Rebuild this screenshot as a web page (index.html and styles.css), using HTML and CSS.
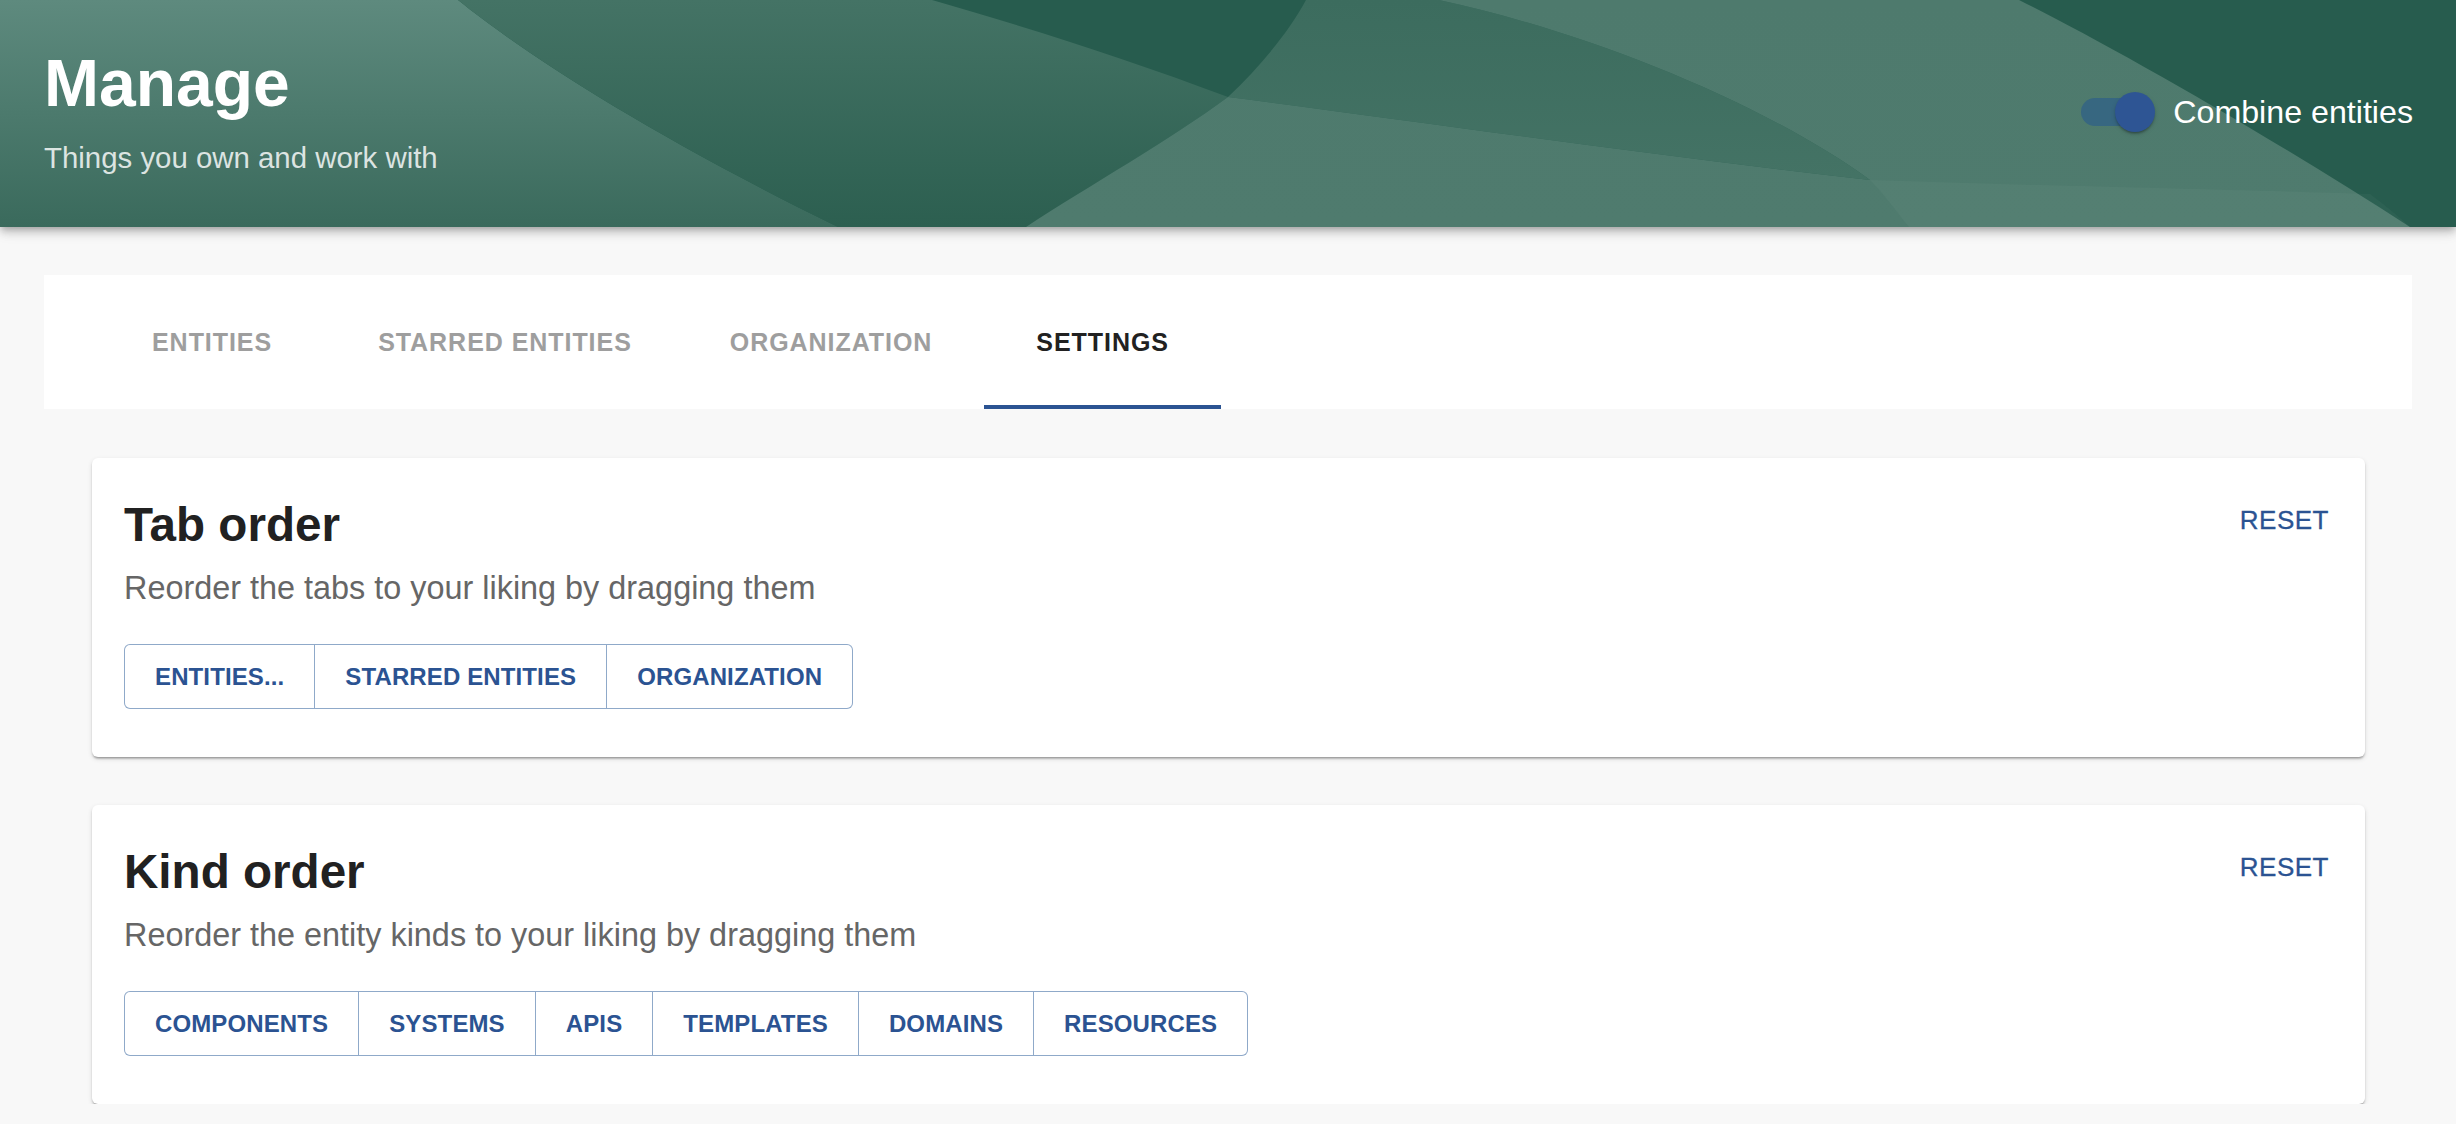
FILE: index.html
```html
<!DOCTYPE html>
<html lang="en">
<head>
<meta charset="utf-8">
<title>Manage</title>
<link rel="stylesheet" href="styles.css">
</head>
<body>
<header class="header">
  <svg class="header-bg" viewBox="0 0 2456 227" preserveAspectRatio="none" aria-hidden="true">
    <defs>
      <linearGradient id="gLeft" x1="0" y1="0" x2="0" y2="1">
        <stop offset="0" stop-color="#5e8a7e"/>
        <stop offset="1" stop-color="#3a6a5c"/>
      </linearGradient>
      <linearGradient id="gMid" x1="0" y1="0" x2="0" y2="1">
        <stop offset="0" stop-color="#447365"/>
        <stop offset="1" stop-color="#2c5f50"/>
      </linearGradient>
      <linearGradient id="gCD" x1="0" y1="0" x2="0" y2="1">
        <stop offset="0" stop-color="#3c6c5e"/>
        <stop offset="1" stop-color="#447365"/>
      </linearGradient>
      <linearGradient id="gLight" x1="0" y1="0" x2="0" y2="1">
        <stop offset="0" stop-color="#4e7a6d"/>
        <stop offset="1" stop-color="#4f7b6e"/>
      </linearGradient>
    </defs>
    <rect x="0" y="0" width="2456" height="227" fill="#275c4e"/>
    <path d="M0 0 H458 C520 50 640 130 838 227 H0 Z" fill="url(#gLeft)"/>
    <path d="M458 0 H932 C1020 25 1130 60 1228 97 C1170 140 1090 185 1026 227 H838 C640 130 520 50 458 0 Z" fill="url(#gMid)"/>
    <path d="M1306 0 H1439 C1580 30 1760 100 1870 180 C1650 155 1420 122 1228 97 C1262 65 1290 30 1306 0 Z" fill="url(#gCD)"/>
    <path d="M1439 0 H2019 C2100 40 2260 130 2410 227 H1026 C1090 185 1170 140 1228 97 C1420 122 1650 155 1870 180 C1760 100 1580 30 1439 0 Z" fill="url(#gLight)"/>
    <path d="M1870 180 C2050 186 2250 190 2370 194 C2385 205 2398 216 2410 227 H1909 C1895 210 1885 195 1870 180 Z" fill="#ffffff" fill-opacity="0.03"/>
  </svg>
  <div class="header-titles">
    <h1 class="header-title">Manage</h1>
    <p class="header-subtitle">Things you own and work with</p>
  </div>
  <label class="combine">
    <span class="switch">
      <span class="switch-track"></span>
      <span class="switch-thumb"></span>
    </span>
    <span class="combine-label">Combine entities</span>
  </label>
</header>

<main class="content">
  <nav class="tabs">
    <div class="tab">ENTITIES</div>
    <div class="tab">STARRED ENTITIES</div>
    <div class="tab">ORGANIZATION</div>
    <div class="tab tab-active">SETTINGS</div>
  </nav>

  <div class="cards">
    <section class="card">
      <div class="card-head">
        <div class="card-text">
          <h2 class="card-title">Tab order</h2>
          <p class="card-sub">Reorder the tabs to your liking by dragging them</p>
        </div>
        <button class="reset" type="button">RESET</button>
      </div>
      <div class="btn-group">
        <button class="chip" type="button">ENTITIES...</button>
        <button class="chip" type="button">STARRED ENTITIES</button>
        <button class="chip" type="button">ORGANIZATION</button>
      </div>
    </section>

    <section class="card">
      <div class="card-head">
        <div class="card-text">
          <h2 class="card-title">Kind order</h2>
          <p class="card-sub">Reorder the entity kinds to your liking by dragging them</p>
        </div>
        <button class="reset" type="button">RESET</button>
      </div>
      <div class="btn-group">
        <button class="chip" type="button">COMPONENTS</button>
        <button class="chip" type="button">SYSTEMS</button>
        <button class="chip" type="button">APIS</button>
        <button class="chip" type="button">TEMPLATES</button>
        <button class="chip" type="button">DOMAINS</button>
        <button class="chip" type="button">RESOURCES</button>
      </div>
    </section>
  </div>
</main>
</body>
</html>
```

FILE: styles.css
```css
* {
  box-sizing: border-box;
}

html, body {
  margin: 0;
  padding: 0;
}

body {
  background: #f8f8f8;
  font-family: "Liberation Sans", Arial, Helvetica, sans-serif;
  color: #212121;
  overflow: hidden;
}

/* ---------- Header ---------- */
.header {
  position: relative;
  isolation: isolate;
  display: flex;
  align-items: center;
  justify-content: space-between;
  padding: 47px 43px 51px 44px;
  color: #ffffff;
  box-shadow: 0 3px 6px -2px rgba(0, 0, 0, 0.2),
              0 6px 8px 0 rgba(0, 0, 0, 0.14),
              0 2px 16px 0 rgba(0, 0, 0, 0.12);
}

.header-bg {
  position: absolute;
  inset: 0;
  width: 100%;
  height: 100%;
  z-index: -1;
  display: block;
}

.header-title {
  margin: 0 0 21px;
  font-size: 66px;
  line-height: 72px;
  font-weight: 700;
  color: #ffffff;
}

.header-subtitle {
  margin: 0;
  font-size: 29.4px;
  line-height: 36px;
  color: rgba(255, 255, 255, 0.82);
}

.combine {
  display: flex;
  align-items: center;
}

.switch {
  position: relative;
  width: 74px;
  height: 40px;
  flex: none;
}

.switch-track {
  position: absolute;
  left: 0;
  top: 6px;
  width: 68px;
  height: 28px;
  border-radius: 14px;
  background: rgba(31, 84, 147, 0.5);
}

.switch-thumb {
  position: absolute;
  left: 34px;
  top: 0;
  width: 40px;
  height: 40px;
  border-radius: 50%;
  background: #2e5594;
  box-shadow: 0 3px 2px -2px rgba(0, 0, 0, 0.2),
              0 2px 2px 0 rgba(0, 0, 0, 0.14),
              0 2px 5px 0 rgba(0, 0, 0, 0.12);
}

.combine-label {
  margin-left: 18px;
  font-size: 32.2px;
  line-height: 40px;
  color: #ffffff;
}

/* ---------- Content ---------- */
.content {
  padding: 48px 44px 0;
}

.tabs {
  display: flex;
  height: 134px;
  padding-left: 56px;
  background: #ffffff;
}

.tab {
  display: flex;
  align-items: center;
  padding: 0 52px;
  font-size: 25px;
  font-weight: 700;
  letter-spacing: 0.95px;
  color: #9e9e9e;
  white-space: nowrap;
}

.tab:nth-child(2) {
  padding-left: 54px;
}

.tab:nth-child(3) {
  padding-left: 46px;
}

.tab-active {
  color: #212121;
  box-shadow: inset 0 -4px 0 #2b5392;
}

.cards {
  display: flex;
  flex-direction: column;
  gap: 48px;
  padding: 49px 47px 0 48px;
}

.card {
  background: #ffffff;
  border-radius: 6px;
  padding: 39px 32px 48px 32px;
  box-shadow: 0 3px 2px -2px rgba(0, 0, 0, 0.22),
              0 2px 2px 0 rgba(0, 0, 0, 0.14),
              0 2px 5px 0 rgba(0, 0, 0, 0.12);
}

.card-head {
  display: flex;
  justify-content: space-between;
  align-items: flex-start;
}

.card-title {
  margin: 0 0 13px;
  font-size: 47.6px;
  line-height: 56px;
  font-weight: 700;
  color: #212121;
}

.card-sub {
  margin: 0;
  font-size: 32.4px;
  line-height: 44px;
  color: #666666;
}

.reset {
  margin-top: 3px;
  padding: 0 4px;
  border: 0;
  background: transparent;
  font-family: "Liberation Sans", Arial, Helvetica, sans-serif;
  font-size: 26px;
  line-height: 40px;
  letter-spacing: 0.5px;
  color: #2b5392;
  -webkit-text-stroke: 0.3px #2b5392;
  cursor: pointer;
}

.btn-group {
  display: flex;
  width: max-content;
  margin-top: 34px;
}

.chip {
  height: 65px;
  padding: 0 30px;
  border: 1px solid rgba(31, 84, 147, 0.5);
  background: #ffffff;
  font-family: "Liberation Sans", Arial, Helvetica, sans-serif;
  font-size: 24px;
  font-weight: 700;
  letter-spacing: 0.12px;
  color: #2b5392;
  border-radius: 0;
  cursor: pointer;
}

.chip + .chip {
  margin-left: -1px;
}

.chip:first-child {
  border-radius: 6px 0 0 6px;
}

.chip:last-child {
  border-radius: 0 6px 6px 0;
}
```
